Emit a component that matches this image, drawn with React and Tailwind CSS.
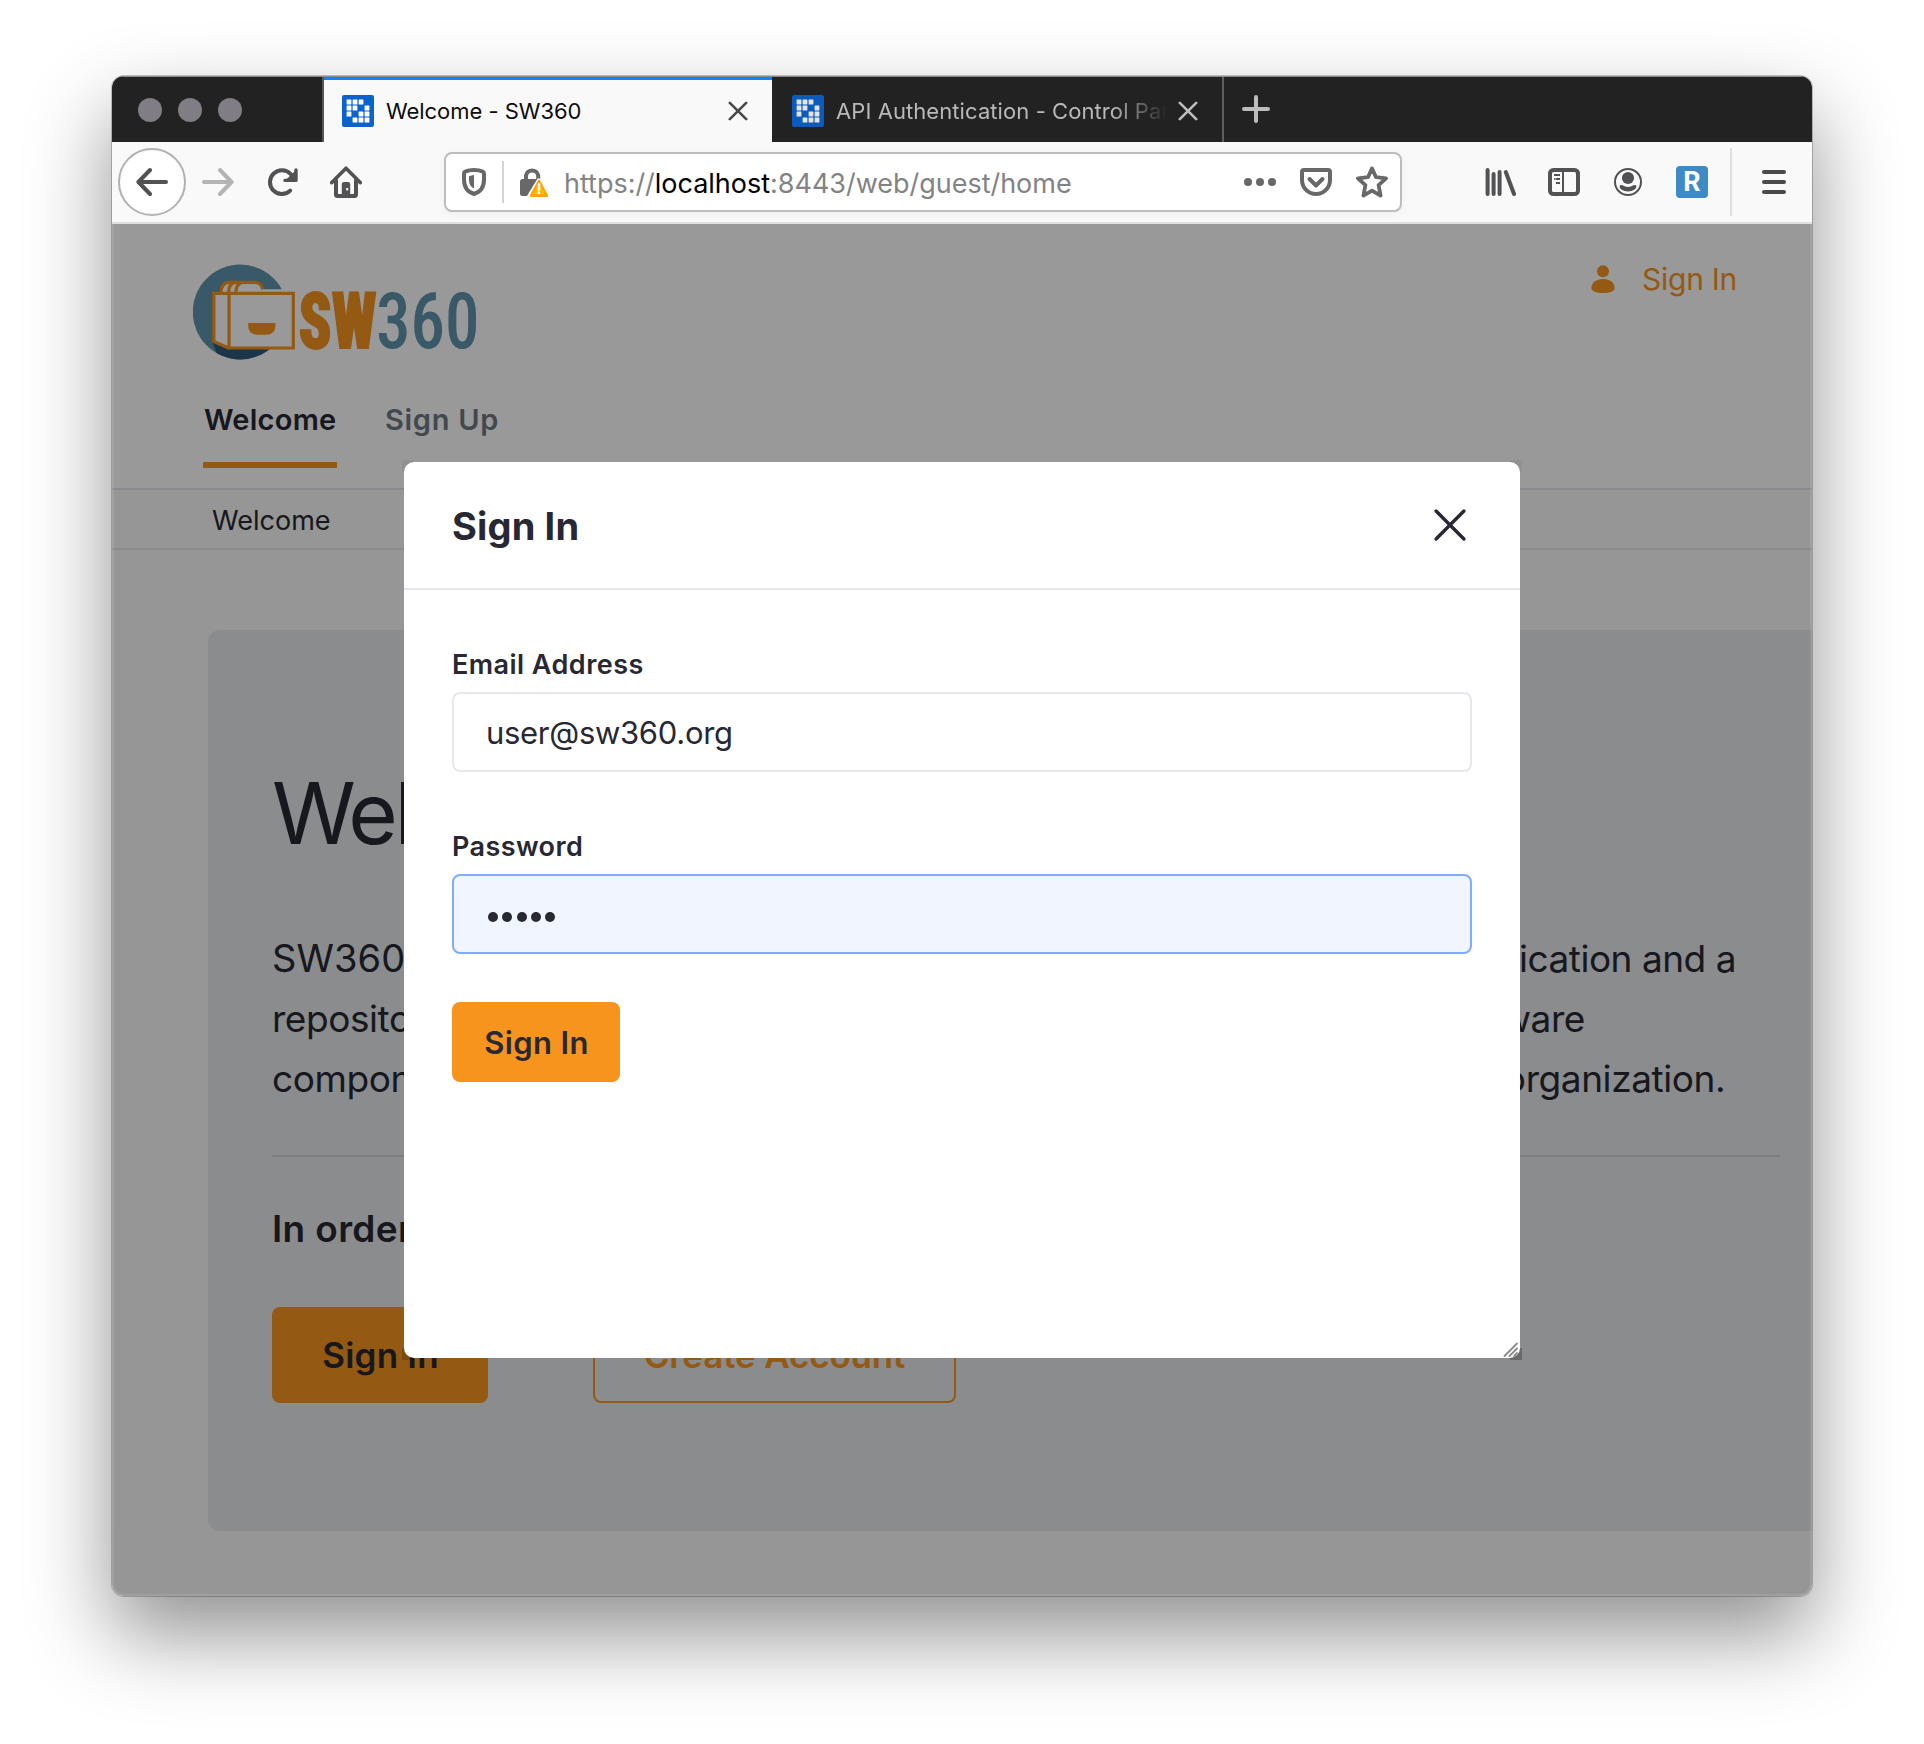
import React from "react";

const Favicon = ({ dim }) => {
  const cells = ["1110", "1101", "1011", "0111"];
  return (
    <svg viewBox="0 0 32 32" className="size-8 shrink-0">
      <rect width="32" height="32" rx="2" fill={dim ? "#0b5bbd" : "#0b63ce"} />
      {cells.map((row, r) =>
        row.split("").map((c, k) =>
          c === "1" ? (
            <rect key={`${r}${k}`} x={4.6 + k * 6} y={4.6 + r * 6} width="4.8" height="4.8" rx="0.5" fill={dim ? "#e4e4e6" : "#fff"} />
          ) : null
        )
      )}
    </svg>
  );
};

const Cross = ({ className, width = 2.6 }) => (
  <svg viewBox="0 0 20 20" className={className} fill="none" stroke="currentColor" strokeWidth={width} strokeLinecap="round">
    <path d="M1.8 1.8L18.2 18.2M18.2 1.8L1.8 18.2" />
  </svg>
);

const Arrow = ({ className }) => (
  <svg viewBox="0 0 32 32" className={className} fill="none" stroke="currentColor" strokeWidth="4" strokeLinecap="round" strokeLinejoin="round">
    <path d="M30 16H3M14 4L2.4 16L14 28" />
  </svg>
);

const Reload = () => (
  <svg viewBox="0 0 32 32" className="size-8" fill="none" stroke="currentColor" strokeLinecap="round" strokeLinejoin="round">
    <path d="M24.2 24.6A11.9 11.9 0 1 1 24.6 8L28 12" strokeWidth="4" />
    <path d="M30 4v10.4H19.2z" fill="currentColor" stroke="none" />
    <path d="M30 4v10.4H19" strokeWidth="3.4" />
  </svg>
);

const Home = () => (
  <svg viewBox="0 0 32 32" className="size-8" fill="none" stroke="currentColor" strokeLinecap="round" strokeLinejoin="round">
    <path d="M1.8 16.6L16 2.2L30.2 16.6" strokeWidth="3.6" />
    <path d="M6 14.5V28.6Q6 30 7.4 30H24.6Q26 30 26 28.6V14.5" strokeWidth="4" />
    <path d="M11.8 30V18.2Q11.8 16 14 16H18Q20.2 16 20.2 18.2V30z" fill="currentColor" stroke="none" />
    <rect x="16.2" y="22" width="2" height="2.4" fill="#f9f9fa" stroke="none" />
  </svg>
);

const Shield = () => (
  <svg viewBox="0 0 24 28" className="h-7 w-6" fill="none">
    <path d="M12 2C8.5 2 5.5 2.6 3.2 3.6Q2 4.1 2 5.4V11.5C2 19.5 5.6 24 12 26C18.4 24 22 19.5 22 11.5V5.4Q22 4.1 20.8 3.6C18.5 2.6 15.5 2 12 2z" stroke="#68686a" strokeWidth="4" strokeLinejoin="round" />
    <path d="M12 7V20.6C8.8 19 7.2 16.5 7 12.5V8.2Q9.3 7.2 12 7z" fill="#68686a" />
  </svg>
);

const LockWarning = () => (
  <svg viewBox="0 0 30 32" className="h-8 w-[30px]" fill="none">
    <path d="M6 15V9.5A6.2 6.2 0 0 1 18.2 9.5V13" stroke="#68686a" strokeWidth="4" />
    <rect x="0" y="13" width="21" height="17" rx="2.5" fill="#68686a" />
    <path d="M19 15L28.5 30.5H9.5z" stroke="#fff" strokeWidth="5" strokeLinejoin="round" />
    <path d="M19 15L26.8 29.6H11.2z" fill="#ffbf00" stroke="#ffa400" strokeWidth="2.6" strokeLinejoin="round" />
    <path d="M19 18.4V23.4M19 26.8V27" stroke="#fff" strokeWidth="2.6" strokeLinecap="round" />
  </svg>
);

const Pocket = () => (
  <svg viewBox="0 0 32 30" className="h-[30px] w-8" fill="none" stroke="currentColor" strokeWidth="4" strokeLinecap="round" strokeLinejoin="round">
    <path d="M4 3H28Q30 3 30 5V13A14 14 0 0 1 2 13V5Q2 3 4 3z" />
    <path d="M9.5 12L16 18.5L22.5 12" />
  </svg>
);

const Star = () => (
  <svg viewBox="0 0 32 32" className="size-8" fill="none" stroke="currentColor" strokeWidth="3.8" strokeLinejoin="round">
    <path d="M16 2.4L20 11.2L30 12.4L22.6 19.2L24.6 29.6L16 24.6L7.4 29.6L9.4 19.2L2 12.4L12 11.2z" />
  </svg>
);

const Library = () => (
  <svg viewBox="0 0 32 32" className="size-8" fill="none" stroke="currentColor" strokeWidth="4" strokeLinecap="round">
    <path d="M3.6 4V28M9.6 8V28M15.6 6V28M21.8 6L30 28" />
  </svg>
);

const Sidebar = () => (
  <svg viewBox="0 0 32 28" className="h-7 w-8" fill="none" stroke="currentColor">
    <rect x="2" y="2" width="28" height="24" rx="3.5" strokeWidth="4" />
    <path d="M15 3V25" strokeWidth="2" />
    <path d="M6 7H12M7.5 11H12M6 11H6.8M8 15H12" strokeWidth="2" />
  </svg>
);

const Account = () => (
  <svg viewBox="0 0 28 28" className="size-7" fill="none">
    <circle cx="14" cy="14" r="13" stroke="currentColor" strokeWidth="2" />
    <circle cx="14" cy="10" r="6.1" fill="currentColor" />
    <path d="M5.6 17.6Q7 16.4 8.6 17.2Q11 19 14 19Q17 19 19.4 17.2Q21 16.4 22.4 17.6Q22.8 20 20.6 21.6Q17.8 23.6 14 23.6Q10.2 23.6 7.4 21.6Q5.2 20 5.6 17.6z" fill="currentColor" />
  </svg>
);

const Logo = () => (
  <svg viewBox="0 0 290 96" className="h-24 w-[290px]" fill="none">
    <defs>
      <clipPath id="disc">
        <circle cx="47.2" cy="48" r="47.4" />
      </clipPath>
    </defs>
    <g clipPath="url(#disc)">
      <rect width="96" height="96" fill="#6093ad" />
      <path d="M19 77L24 90L40 97H80V84H36z" fill="#305a7a" />
    </g>
    <g fill="#fff">
      <path d="M20.8 28H36V84L20.8 77.4z" />
      <path d="M36 25.2H101V84H36z" />
      <path d="M28.5 28Q29 18 36.5 18H62Q69 18 69.6 28z" />
    </g>
    <g stroke="#f7941e" strokeWidth="3.2">
      <path d="M36 29.3H100.3V84H36z" />
      <path d="M36 29.3H20.8V77.4L36 84.2" />
      <path d="M28 28.5C28.2 21.5 31 18.4 36.5 18.4H61C66.5 18.4 68.6 20.6 69.6 25.4" />
      <path d="M35.6 28.5C35.8 23 37.4 19.6 41 18.6M42.8 28.5C43 22.5 45 19.4 49 18.6" />
    </g>
    <path d="M55.2 59H82.4V61.5Q82.4 70.8 73 70.8H64.6Q55.2 70.8 55.2 61.5z" fill="#f7941e" />
    <text x="105.5" y="84.3" fontSize="77" fontWeight="900" fontFamily="'Roboto Condensed', Roboto, sans-serif" fill="#f7941e" stroke="#f7941e" strokeWidth="1.8" textLength="78" lengthAdjust="spacingAndGlyphs">SW</text>
    <text x="183" y="84.2" fontSize="78" fontWeight="500" fontFamily="'Roboto Condensed', Roboto, sans-serif" fill="#6093ad" textLength="103.5" lengthAdjust="spacingAndGlyphs">360</text>
  </svg>
);

const TitleBar = () => (
  <div className="flex h-[66px] border-t border-[#8a8a8a] bg-[#222]">
    <div className="flex w-[212px] items-center gap-4 border-r-2 border-[#555] pl-[26px]">
      <span className="size-6 rounded-full bg-[#807e84]" />
      <span className="size-6 rounded-full bg-[#807e84]" />
      <span className="size-6 rounded-full bg-[#807e84]" />
    </div>
    <div className="flex w-[448px] items-center border-t-[3px] border-[#0a84ff] bg-[#f9f9fa] pl-[18px] text-[22px] text-[#0c0c0d]">
      <Favicon />
      <span className="ml-3 grow tracking-[-0.04px]">Welcome - SW360</span>
      <Cross className="mr-6 size-5 text-[#4a4a4b]" />
    </div>
    <div className="flex w-[452px] items-center border-r-2 border-[#5e5e5e] pt-0.5 pl-5 text-[22px] text-[#b9b9b9]">
      <Favicon dim />
      <span className="ml-3 w-[332px] overflow-hidden pt-0.5 tracking-[0.08px] whitespace-nowrap [mask-image:linear-gradient(to_right,#000_275px,transparent_332px)]">API Authentication - Control Panel</span>
      <Cross className="ml-[10px] size-5 text-[#bdbdbd]" />
    </div>
    <svg viewBox="0 0 28 28" className="mt-[18px] ml-[18px] size-7" stroke="#bdbdbd" strokeWidth="4" strokeLinecap="round">
      <path d="M14 2V26M2 14H26" />
    </svg>
  </div>
);

const Toolbar = () => (
  <div className="flex h-[82px] items-center border-b-2 border-[#e0e0e1] bg-[#f9f9fa] text-[#525254]">
    <div className="ml-1.5 flex size-[68px] items-center justify-center rounded-full border-2 border-[#b1b1b2] bg-white">
      <Arrow className="size-8" />
    </div>
    <Arrow className="ml-4 size-8 rotate-180 text-[#b4b4b5]" />
    <span className="ml-8"><Reload /></span>
    <span className="ml-8"><Home /></span>
    <div className="ml-[82px] flex h-[60px] w-[958px] items-center rounded-lg border-2 border-[#bdbdbe] bg-white pl-4 text-[#68686a] shadow-[0_2px_8px_rgba(0,0,0,0.05)]">
      <Shield />
      <span className="ml-4 h-[42px] w-0.5 bg-[#d4d4d5]" />
      <span className="ml-4"><LockWarning /></span>
      <span className="ml-[14px] w-[669px] pt-1 text-[27px] tracking-[-0.02px] whitespace-nowrap text-[#838384]">
        https://<span className="text-black">localhost</span>:8443/web/guest/home
      </span>
      <div className="ml-[11px] flex gap-1">
        <span className="size-2 rounded-full bg-[#68686a]" />
        <span className="size-2 rounded-full bg-[#68686a]" />
        <span className="size-2 rounded-full bg-[#68686a]" />
      </div>
      <span className="ml-6"><Pocket /></span>
      <span className="ml-6"><Star /></span>
    </div>
    <span className="ml-[82px]"><Library /></span>
    <span className="ml-8"><Sidebar /></span>
    <span className="ml-[34px]"><Account /></span>
    <span className="ml-[34px] flex size-8 items-center justify-center rounded-sm bg-[#3d8ac7] font-['Roboto',sans-serif] text-[27px] leading-8 font-bold text-white">R</span>
    <span className="ml-[22px] h-[68px] w-0.5 bg-[#dededf]" />
    <div className="ml-[30px] flex flex-col gap-1.5">
      <span className="h-1 w-6 rounded-full bg-[#4a4a4c]" />
      <span className="h-1 w-6 rounded-full bg-[#4a4a4c]" />
      <span className="h-1 w-6 rounded-full bg-[#4a4a4c]" />
    </div>
  </div>
);

const Page = () => (
  <div className="bg-[#fafafa] text-[#272833]">
    <header className="h-[266px] border-b-2 border-[#e7e7ed] bg-white">
      <div className="flex items-start justify-between pt-[35px]">
        <div className="mt-[5px] ml-[81px]"><Logo /></div>
        <div className="mr-[75px] flex items-center text-[#f7941e]">
          <svg viewBox="0 0 24 28" className="h-7 w-6" fill="currentColor">
            <circle cx="12" cy="6.2" r="6" />
            <path d="M12 14C5 14 0.4 17.8 0.4 23C0.4 26.4 5 28 12 28S23.6 26.4 23.6 23C23.6 17.8 19 14 12 14z" />
          </svg>
          <span className="ml-[27px] text-[30px] leading-10 tracking-[-0.28px]">Sign In</span>
        </div>
      </div>
      <nav className="mt-[42px] ml-[91px] flex text-[29px] leading-9 font-semibold">
        <span className="w-[134px] border-b-[6px] border-[#f7941e] pb-6 pl-px tracking-[0.25px]">Welcome</span>
        <span className="ml-12 tracking-[0.7px] text-[#6f7a82]">Sign Up</span>
      </nav>
    </header>
    <div className="flex h-[60px] items-center border-b-2 border-[#e7e7e8] pt-1 pl-[100px] text-[27px]">Welcome</div>
    <main className="mt-20 ml-24 h-[901px] rounded-l-xl bg-[#e8e9ec] pt-[134px] pl-16">
      <h1 className="text-[85px] leading-[100px] tracking-[-3.2px]">Welcome to SW360!</h1>
      <div className="mt-[65px] text-[37px] leading-[60px] whitespace-nowrap">
        <p className="h-[60px] tracking-[-0.48px]"><span className="text-[38px] leading-none tracking-[0.1px]">SW360</span> is an open source software project that provides both a web application and a</p>
        <p className="tracking-[-0.44px]">repository to collect, organize and make available information about software</p>
        <p className="tracking-[-0.42px]">components. It establishes a central hub for software components in an organization.</p>
      </div>
      <div className="mt-[46px] h-0.5 w-[1508px] bg-[#d2d3d6]" />
      <p className="mt-12 text-[37px] leading-[48px] font-semibold tracking-[0.35px]">In order to go ahead, please use the options below</p>
      <div className="mt-[54px] flex gap-[105px] text-[35px] font-semibold">
        <div className="flex h-24 w-[216px] items-center justify-center rounded-lg bg-[#f7941e] pl-px tracking-[0.2px]">Sign In</div>
        <div className="flex h-24 w-[363px] items-center justify-center rounded-lg border-2 border-[#f7941e] tracking-[-0.16px] text-[#f7941e]">Create Account</div>
      </div>
    </main>
  </div>
);

const Dialog = () => (
  <div className="absolute top-[238px] left-[292px] h-[896px] w-[1116px]">
    <span className="absolute -top-0.5 -left-0.5 size-3 bg-black/5" />
    <span className="absolute -top-0.5 -right-0.5 size-3 bg-black/5" />
    <span className="absolute -bottom-0.5 -left-0.5 size-3 bg-black/15" />
    <span className="absolute -right-0.5 -bottom-0.5 size-3 bg-[#68696a]" />
    <div className="relative h-full rounded-[10px] bg-white text-[#272833]">
      <div className="flex h-32 items-center justify-between border-b-2 border-[#e7e7ed] pr-[53px] pl-12">
        <span className="pt-[3px] text-[38px] font-bold tracking-[0.15px]">Sign In</span>
        <Cross className="size-[34px]" width={2} />
      </div>
      <div className="flex flex-col px-12 pt-[55px]">
        <label className="text-[27px] leading-10 font-semibold tracking-[0.46px]">Email Address</label>
        <div className="mt-[7px] flex h-20 items-center rounded-lg border-2 border-[#e7e7ed] pt-0.5 pl-8 text-[31px] tracking-[-0.3px]">user@sw360.org</div>
        <label className="mt-[55px] text-[27px] leading-10 font-semibold tracking-[0.4px]">Password</label>
        <div className="mt-[7px] flex h-20 items-center gap-1 rounded-lg border-2 border-[#80acff] bg-[#f0f5ff] pt-1.5 pl-[34px]">
          {[0, 1, 2, 3, 4].map((i) => (
            <span key={i} className="mr-[0.25px] size-[10px] rounded-full bg-[#272833]" />
          ))}
        </div>
        <div className="mt-12 flex h-20 w-[168px] items-center justify-center rounded-lg bg-[#f7941e] pt-0.5 pl-px text-[31px] font-semibold tracking-[0.35px]">Sign In</div>
      </div>
      <svg viewBox="0 0 16 16" className="absolute right-px bottom-0 size-4" stroke="#8c8c8c" strokeWidth="1.8" strokeLinecap="round">
        <path d="M1.5 14L14 1.5M6.5 14L14 6.5M11 14L14 11" />
      </svg>
    </div>
  </div>
);

export default function App() {
  return (
    <div className="flex h-[1744px] w-[1924px] justify-center overflow-hidden bg-white pt-[76px] font-['Inter',sans-serif]">
      <div className="h-[1520px] w-[1700px] rounded-xl shadow-[0_0_0_1px_rgba(0,0,0,0.22),0_38px_84px_rgba(0,0,0,0.44)]">
        <div className="flex h-full flex-col overflow-hidden rounded-xl">
          <TitleBar />
          <Toolbar />
          <div className="relative grow overflow-hidden bg-[#fafafa]">
            <Page />
            <div className="absolute inset-0 bg-black/40" />
            <div className="absolute inset-0 rounded-b-xl border-x-2 border-b-2 border-white/10" />
            <Dialog />
          </div>
        </div>
      </div>
    </div>
  );
}
